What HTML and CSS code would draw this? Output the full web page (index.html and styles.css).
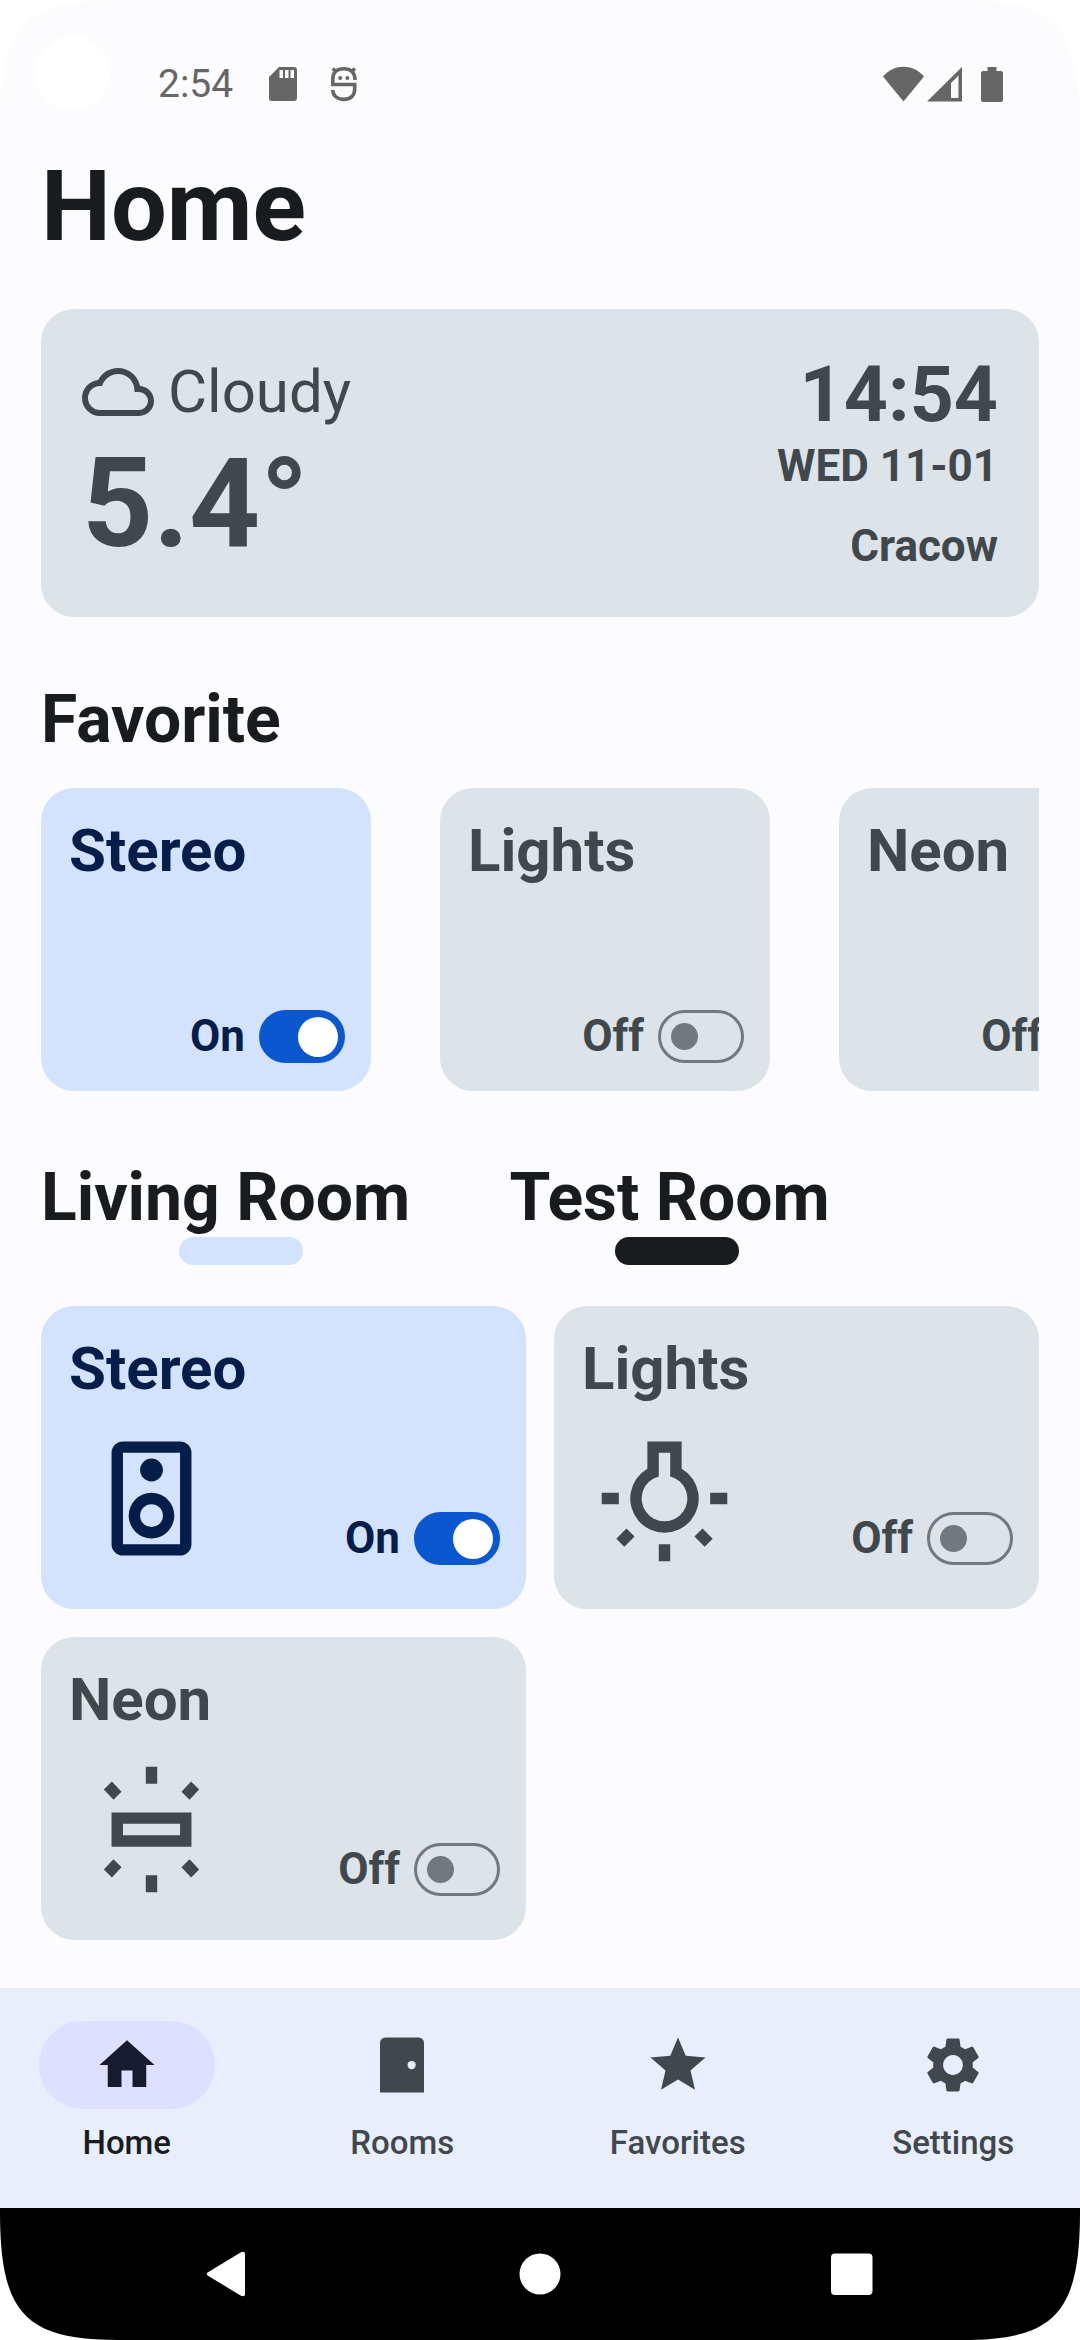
FILE: index.html
```html
<!DOCTYPE html>
<html lang="en">
<head>
<meta charset="utf-8">
<title>Home</title>
<meta name="viewport" content="width=device-width, initial-scale=1">
<link rel="stylesheet" href="styles.css">
</head>
<body>
<div class="screen">
  <header class="status-bar">
    <span class="camera"></span>
    <span class="clock">2:54</span>
    <svg class="status-icon sd" viewBox="0 0 28 36" aria-hidden="true"><path fill-rule="evenodd" d="M10 1H25a3 3 0 0 1 3 3V32a3 3 0 0 1-3 3H3a3 3 0 0 1-3-3V11ZM10.500 4V12H14V4ZM16 4V12H19.500V4ZM21.500 4V12H25V4Z"/></svg>
    <svg class="status-icon debug" viewBox="0 0 26 36" aria-hidden="true"><g fill="none" stroke="currentColor" stroke-width="3.600"><path d="M24 14C24 6 19.500 2.800 12.800 2.800S1.800 6 1.800 13V18.500H23.700V23C23.700 29.500 19.500 33.400 12.800 33.400S1.800 29.500 1.800 24"/><path d="M1.800 2.500l4 4M23.800 2.500l-4 4"/></g><circle cx="9.200" cy="12" r="2"/><circle cx="16.400" cy="12" r="2"/></svg>
    <span class="spacer"></span>
    <svg class="status-icon wifi" viewBox="0 0 41 36" aria-hidden="true"><path d="M0 10.500C11-2.500 30-2.500 41 10.500L20.500 35.500Z"/></svg>
    <svg class="status-icon signal" viewBox="0 0 35 36" aria-hidden="true"><path fill-rule="evenodd" d="M0 35.500L35 1V35.500ZM24 17V32H31.500V9.500Z"/></svg>
    <svg class="status-icon battery" viewBox="0 0 22 36" aria-hidden="true"><path d="M6.500 1H15.500V5H20a2 2 0 0 1 2 2V34a2 2 0 0 1-2 2H2a2 2 0 0 1-2-2V7a2 2 0 0 1 2-2H6.500Z"/></svg>
  </header>

  <main class="content">
    <h1 class="page-title">Home</h1>

    <section class="weather" aria-label="Weather">
      <div class="weather-now">
        <div class="condition">
          <svg class="cloud" viewBox="0 0 24 24" aria-hidden="true"><path d="M19,18H6A4,4 0 0,1 2,14A4,4 0 0,1 6,10H6.71C7.37,7.69 9.5,6 12,6A5.5,5.5 0 0,1 17.5,11.5V12H19A3,3 0 0,1 22,15A3,3 0 0,1 19,18M19.35,10.04C18.67,6.59 15.64,4 12,4C9.11,4 6.61,5.64 5.36,8.04C2.34,8.36 0,10.91 0,14A6,6 0 0,0 6,20H19A5,5 0 0,0 24,15C24,12.36 21.95,10.22 19.35,10.04Z"/></svg>
          <span>Cloudy</span>
        </div>
        <div class="temperature">5.4°</div>
      </div>
      <div class="weather-side">
        <div class="time">14:54</div>
        <div class="meta">WED 11-01</div>
        <div class="meta city">Cracow</div>
      </div>
    </section>

    <h2 class="section-title">Favorite</h2>
    <section class="favorites" aria-label="Favorite devices">
      <article class="card on">
        <h3 class="card-title">Stereo</h3>
        <label class="toggle"><span>On</span><input class="switch" type="checkbox" role="switch" checked></label>
      </article>
      <article class="card">
        <h3 class="card-title">Lights</h3>
        <label class="toggle"><span>Off</span><input class="switch" type="checkbox" role="switch"></label>
      </article>
      <article class="card">
        <h3 class="card-title">Neon</h3>
        <label class="toggle"><span>Off</span><input class="switch" type="checkbox" role="switch"></label>
      </article>
    </section>

    <div class="room-tabs" role="tablist">
      <button class="room-tab selected" type="button" role="tab" aria-selected="true">Living Room&nbsp;</button>
      <button class="room-tab" type="button" role="tab" aria-selected="false">Test Room</button>
    </div>

    <section class="devices" aria-label="Living Room devices">
      <article class="card on">
        <h3 class="card-title">Stereo</h3>
        <div class="card-foot">
          <svg class="device-icon" viewBox="0 0 24 24" aria-hidden="true"><path fill-rule="evenodd" d="M7 2h10a2 2 0 0 1 2 2v16a2 2 0 0 1-2 2H7a2 2 0 0 1-2-2V4a2 2 0 0 1 2-2ZM7 4v16h10V4Z"/><circle cx="12" cy="7" r="2"/><path fill-rule="evenodd" d="M12 11a4 4 0 1 0 0 8 4 4 0 0 0 0-8Zm0 2a2 2 0 1 1 0 4 2 2 0 0 1 0-4Z"/></svg>
          <label class="toggle"><span>On</span><input class="switch" type="checkbox" role="switch" checked></label>
        </div>
      </article>
      <article class="card">
        <h3 class="card-title">Lights</h3>
        <div class="card-foot">
          <svg class="device-icon" viewBox="0 0 24 24" aria-hidden="true"><path fill-rule="evenodd" d="M9 2h6v4.800a6 6 0 1 1-6 0ZM11 4v4.130a4 4 0 1 0 2 0V4Z"/><path d="M1 11h3v2H1ZM20 11h3v2h-3ZM11 20h2v3h-2ZM3.550 19.050L5.340 17.260 6.750 18.670 4.960 20.460ZM20.450 19.050L18.660 17.260 17.250 18.670 19.040 20.460Z"/></svg>
          <label class="toggle"><span>Off</span><input class="switch" type="checkbox" role="switch"></label>
        </div>
      </article>
      <article class="card">
        <h3 class="card-title">Neon</h3>
        <div class="card-foot">
          <svg class="device-icon" viewBox="0 0 24 24" aria-hidden="true"><path fill-rule="evenodd" d="M5 9h14v6H5ZM7 11v2h10v-2Z"/><path d="M11 1h2v3h-2ZM11 20h2v3h-2ZM3.650 5.010L5.060 3.600 6.750 5.390 5.340 6.800ZM20.350 5.010L18.940 3.600 17.250 5.390 18.660 6.800ZM3.650 18.990L5.060 20.400 6.750 18.610 5.340 17.200ZM20.350 18.990L18.940 20.400 17.250 18.610 18.660 17.200Z"/></svg>
          <label class="toggle"><span>Off</span><input class="switch" type="checkbox" role="switch"></label>
        </div>
      </article>
    </section>
  </main>

  <nav class="tab-bar" aria-label="Main">
    <a class="tab current" href="#home" aria-current="page">
      <span class="pill"><svg viewBox="0 0 24 24" aria-hidden="true"><path d="M10 20v-6h4v6h5v-8h3L12 3 2 12h3v8z"/></svg></span>
      <span>Home</span>
    </a>
    <a class="tab" href="#rooms">
      <span class="pill"><svg viewBox="0 0 24 24" aria-hidden="true"><path fill-rule="evenodd" d="M6 2h12a2 2 0 0 1 2 2v18H4V4a2 2 0 0 1 2-2ZM15.500 10.500a1.500 1.500 0 1 0 0 3 1.500 1.500 0 0 0 0-3Z"/></svg></span>
      <span>Rooms</span>
    </a>
    <a class="tab" href="#favorites">
      <span class="pill"><svg viewBox="0 0 24 24" aria-hidden="true"><path d="M12 17.270L18.180 21l-1.640-7.030L22 9.240l-7.190-.610L12 2 9.190 8.630 2 9.240l5.460 4.730L5.820 21z"/></svg></span>
      <span>Favorites</span>
    </a>
    <a class="tab" href="#settings">
      <span class="pill"><svg viewBox="0 0 24 24" aria-hidden="true"><path d="M19.14,12.94c0.04-0.3,0.06-0.61,0.06-0.94c0-0.32-0.02-0.64-0.07-0.94l2.03-1.58c0.18-0.14,0.23-0.41,0.12-0.61l-1.92-3.32c-0.12-0.22-0.37-0.29-0.59-0.22l-2.39,0.96c-0.5-0.38-1.03-0.7-1.62-0.94L14.4,2.81c-0.04-0.24-0.24-0.41-0.48-0.41h-3.84c-0.24,0-0.43,0.17-0.47,0.41L9.25,5.35C8.66,5.59,8.12,5.92,7.63,6.29L5.24,5.33c-0.22-0.08-0.47,0-0.59,0.22L2.74,8.87C2.62,9.08,2.66,9.34,2.86,9.48l2.03,1.58C4.84,11.36,4.8,11.69,4.8,12s0.02,0.64,0.07,0.94l-2.03,1.58c-0.18,0.14-0.23,0.41-0.12,0.61l1.92,3.32c0.12,0.22,0.37,0.29,0.59,0.22l2.39-0.96c0.5,0.38,1.03,0.7,1.62,0.94l0.36,2.54c0.05,0.24,0.24,0.41,0.48,0.41h3.84c0.24,0,0.44-0.17,0.47-0.41l0.36-2.54c0.59-0.24,1.13-0.56,1.62-0.94l2.39,0.96c0.22,0.08,0.47,0,0.59-0.22l1.92-3.32c0.12-0.22,0.07-0.47-0.12-0.61L19.14,12.94zM12,15.6c-1.98,0-3.6-1.62-3.6-3.6s1.62-3.6,3.6-3.6s3.6,1.62,3.6,3.6S13.98,15.6,12,15.6z"/></svg></span>
      <span>Settings</span>
    </a>
  </nav>

  <div class="system-bar">
    <button type="button" aria-label="Back"><svg viewBox="0 0 48 48" aria-hidden="true"><path d="M4 22.300L36.500 2.500Q41 0.500 41 4V44Q41 47.500 36.500 45.500L4 25.700Q1.500 24 4 22.300Z"/></svg></button>
    <button type="button" aria-label="Home screen"><svg viewBox="0 0 48 48" aria-hidden="true"><circle cx="24" cy="24" r="20.500"/></svg></button>
    <button type="button" aria-label="Recent apps"><svg viewBox="0 0 48 48" aria-hidden="true"><rect x="3" y="3.500" width="41.500" height="41.500" rx="4"/></svg></button>
  </div>

  <svg class="corner top left" viewBox="0 0 118 128" aria-hidden="true"><path d="M0 0C0 101 25 128 118 128H0Z"/></svg>
  <svg class="corner top right" viewBox="0 0 118 128" aria-hidden="true"><path d="M0 0C0 101 25 128 118 128H0Z"/></svg>
  <svg class="corner bottom left" viewBox="0 0 118 128" aria-hidden="true"><path d="M0 0C0 101 25 128 118 128H0Z"/></svg>
  <svg class="corner bottom right" viewBox="0 0 118 128" aria-hidden="true"><path d="M0 0C0 101 25 128 118 128H0Z"/></svg>
</div>
</body>
</html>
```
FILE: styles.css
```css
:root {
  --surface: #fcfcff;
  --card: #dce3e9;
  --card-on: #d3e3fd;
  --ink: #191c1e;
  --ink-muted: #41484d;
  --ink-on: #041e49;
  --accent: #0b57d0;
  --outline: #71787e;
}

* {
  box-sizing: border-box;
}

body {
  margin: 0;
  background: #fff;
  color: var(--ink);
  font-family: Roboto, "Liberation Sans", sans-serif;
}

h1, h2, h3 {
  margin: 0;
  font-weight: 700;
}

button {
  border: 0;
  padding: 0;
  background: none;
  color: inherit;
  font: inherit;
}

svg {
  display: block;
  fill: currentColor;
}

.screen {
  position: relative;
  display: flex;
  flex-direction: column;
  min-height: 100vh;
  overflow: hidden;
  background: var(--surface);
}

/* Status bar */
.status-bar {
  display: flex;
  align-items: center;
  height: 140px;
  padding: 27px 77px 0 158px;
  color: #666;
  font-size: 39px;
}

.camera {
  position: absolute;
  top: 36px;
  left: 35px;
  width: 75px;
  height: 75px;
  border-radius: 50%;
  background: #fff;
}

.status-icon {
  height: 36px;
}

.sd {
  width: 28px;
  margin-left: 36px;
}

.debug {
  width: 26px;
  margin-left: 34px;
}

.spacer {
  flex: 1;
}

.wifi {
  width: 41px;
}

.signal {
  width: 35px;
  margin-left: 3px;
}

.battery {
  width: 22px;
  margin-left: 19px;
}

/* Page */
.content {
  flex: 1;
  padding: 0 41px 48px;
}

.page-title {
  padding-bottom: 37px;
  font-size: 99px;
  line-height: 132px;
}

.weather {
  display: flex;
  justify-content: space-between;
  min-height: 308px;
  padding: 41px;
  border-radius: 33px;
  background: var(--card);
  color: var(--ink-muted);
}

.condition {
  display: flex;
  align-items: center;
  gap: 14px;
  font-size: 60px;
  line-height: 84px;
}

.cloud {
  width: 72px;
  height: 72px;
}

.temperature {
  font-size: 124px;
  font-weight: 700;
  line-height: 140px;
}

.weather-side {
  text-align: right;
  font-weight: 700;
}

.time {
  font-size: 77px;
  line-height: 90px;
}

.meta {
  font-size: 44px;
  line-height: 52px;
}

.city {
  padding-top: 28px;
}

.section-title {
  padding: 62px 0 28px;
  font-size: 66px;
  line-height: 81px;
}

.favorites {
  display: flex;
  gap: 69px;
  overflow: hidden;
}

.favorites .card {
  flex: 0 0 330px;
  padding-bottom: 28px;
}

.card {
  display: flex;
  flex-direction: column;
  justify-content: space-between;
  min-height: 303px;
  padding: 28px 26px 42px 28px;
  border-radius: 33px;
  background: var(--card);
  color: var(--ink-muted);
}

.card.on {
  background: var(--card-on);
  color: var(--ink-on);
}

.card-title {
  font-size: 60px;
  line-height: 70px;
}

.card-foot {
  display: flex;
  align-items: flex-end;
  justify-content: space-between;
  padding-left: 14px;
}

.device-icon {
  width: 137px;
  height: 137px;
}

.toggle {
  display: flex;
  align-items: center;
  justify-content: flex-end;
  gap: 14px;
  font-size: 44px;
  font-weight: 700;
  line-height: 53px;
}

.card-foot .toggle {
  padding-bottom: 2px;
}

.switch {
  appearance: none;
  display: flex;
  align-items: center;
  width: 86px;
  height: 53px;
  margin: 0;
  padding: 0 10px;
  border: 3px solid var(--outline);
  border-radius: 27px;
}

.switch::before {
  content: "";
  width: 27px;
  height: 27px;
  border-radius: 50%;
  background: var(--outline);
}

.switch:checked {
  justify-content: flex-end;
  padding: 0 4px;
  border-color: var(--accent);
  background: var(--accent);
}

.switch:checked::before {
  width: 40px;
  height: 40px;
  background: #fff;
}

/* Room tabs */
.room-tabs {
  display: flex;
  gap: 69px;
  padding: 67px 0 41px;
}

.room-tab {
  display: flex;
  flex-direction: column;
  padding-right: 14px;
  font-size: 66px;
  font-weight: 700;
  line-height: 79px;
}

.room-tab::after {
  content: "";
  width: 124px;
  height: 28px;
  margin: 0 -14px 0 0;
  align-self: center;
  border-radius: 14px;
  background: var(--ink);
}

.room-tab.selected::after {
  background: var(--card-on);
}

.devices {
  display: grid;
  grid-template-columns: 1fr 1fr;
  gap: 28px;
}

/* Bottom navigation */
.tab-bar {
  display: grid;
  grid-template-columns: repeat(4, 1fr);
  gap: 22px;
  height: 220px;
  padding-top: 33px;
  background: #e8eefc;
}

.tab {
  display: flex;
  flex-direction: column;
  align-items: center;
  gap: 12px;
  color: var(--ink-muted);
  font-size: 33px;
  font-weight: 500;
  line-height: 44px;
  text-decoration: none;
}

.pill {
  display: grid;
  place-items: center;
  width: 176px;
  height: 88px;
  border-radius: 44px;
}

.pill svg {
  width: 66px;
  height: 66px;
}

.tab.current {
  color: var(--ink);
}

.current .pill {
  background: #dfe0ff;
  color: #171b2f;
}

/* System navigation */
.system-bar {
  display: grid;
  grid-template-columns: repeat(3, 1fr);
  height: 132px;
  padding: 0 72px;
  background: #000;
  color: #fff;
}

.system-bar button {
  display: grid;
  place-items: center;
}

.system-bar svg {
  width: 48px;
  height: 48px;
}

/* Rounded display corners */
.corner {
  position: absolute;
  width: 118px;
  height: 128px;
  fill: #fff;
}

.top {
  top: 0;
}

.bottom {
  bottom: 0;
}

.left {
  left: 0;
}

.right {
  right: 0;
}

.top.left {
  transform: scaleY(-1);
}

.top.right {
  transform: scale(-1);
}

.bottom.right {
  transform: scaleX(-1);
}
```
